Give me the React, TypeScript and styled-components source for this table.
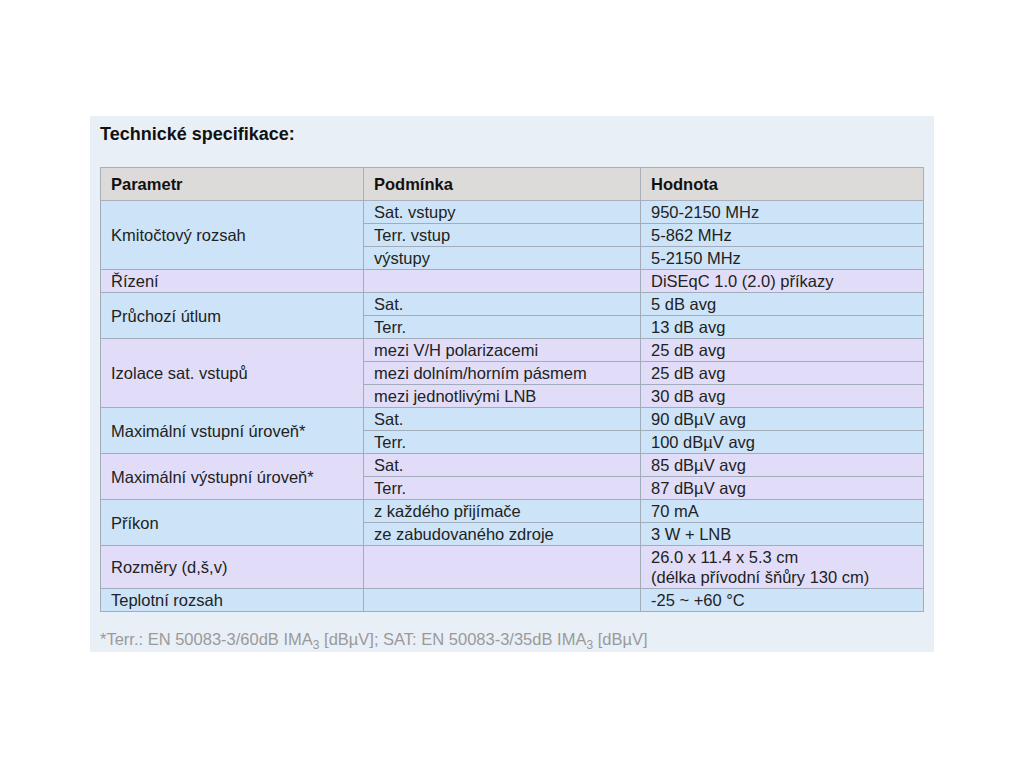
import React from "react";
import styled, { createGlobalStyle } from "styled-components";

const GlobalStyle = createGlobalStyle`
  body {
    margin: 0;
    background: #ffffff;
    font-family: "Liberation Sans", Arial, sans-serif;
  }
`;

const Page = styled.div`
  width: 1024px;
  height: 768px;
  padding: 116px 0 0 90px;
  box-sizing: border-box;
`;

const Panel = styled.section`
  width: 844px;
  height: 536px;
  box-sizing: border-box;
  background: #e9eff6;
  padding: 8px 9px 0 10px;
  display: flex;
  flex-direction: column;
`;

const Title = styled.h3`
  margin: 0;
  font-size: 18px;
  line-height: 20px;
  font-weight: bold;
  color: #111;
`;

const Table = styled.table`
  margin-top: 23px;
  width: 823px;
  border-collapse: collapse;
  table-layout: fixed;
  font-size: 16.5px;
  color: #222;
`;

const Th = styled.th`
  background: #dcdbda;
  border: 1px solid #a9b0b9;
  text-align: left;
  font-weight: bold;
  height: 33px;
  padding: 0 10px;
  box-sizing: border-box;
  color: #111;
`;

const Td = styled.td<{ $tone: "blue" | "lilac" }>`
  background: ${(p) => (p.$tone === "blue" ? "#cde4f8" : "#e1ddf8")};
  border: 1px solid #a3acba;
  padding: 1px 10px;
  line-height: 20px;
  vertical-align: middle;
`;

const Note = styled.p`
  margin: 17px 0 0 0;
  font-size: 16.5px;
  line-height: 20px;
  color: #9a9a9a;
  sub {
    font-size: 12px;
    line-height: 0;
  }
`;

type Group = {
  name: string;
  rows: [string, React.ReactNode][];
};

const groups: Group[] = [
  {
    name: "Kmitočtový rozsah",
    rows: [
      ["Sat. vstupy", "950-2150 MHz"],
      ["Terr. vstup", "5-862 MHz"],
      ["výstupy", "5-2150 MHz"],
    ],
  },
  { name: "Řízení", rows: [["", "DiSEqC 1.0 (2.0) příkazy"]] },
  {
    name: "Průchozí útlum",
    rows: [
      ["Sat.", "5 dB avg"],
      ["Terr.", "13 dB avg"],
    ],
  },
  {
    name: "Izolace sat. vstupů",
    rows: [
      ["mezi V/H polarizacemi", "25 dB avg"],
      ["mezi dolním/horním pásmem", "25 dB avg"],
      ["mezi jednotlivými LNB", "30 dB avg"],
    ],
  },
  {
    name: "Maximální vstupní úroveň*",
    rows: [
      ["Sat.", "90 dBµV avg"],
      ["Terr.", "100 dBµV avg"],
    ],
  },
  {
    name: "Maximální výstupní úroveň*",
    rows: [
      ["Sat.", "85 dBµV avg"],
      ["Terr.", "87 dBµV avg"],
    ],
  },
  {
    name: "Příkon",
    rows: [
      ["z každého přijímače", "70 mA"],
      ["ze zabudovaného zdroje", "3 W + LNB"],
    ],
  },
  {
    name: "Rozměry (d,š,v)",
    rows: [
      [
        "",
        <>
          26.0 x 11.4 x 5.3 cm
          <br />
          (délka přívodní šňůry 130 cm)
        </>,
      ],
    ],
  },
  { name: "Teplotní rozsah", rows: [["", "-25 ~ +60 °C"]] },
];

export default function App() {
  return (
    <>
      <GlobalStyle />
      <Page>
        <Panel>
          <Title>Technické specifikace:</Title>
          <Table>
            <colgroup>
              <col style={{ width: 263 }} />
              <col style={{ width: 277 }} />
              <col style={{ width: 283 }} />
            </colgroup>
            <thead>
              <tr>
                <Th>Parametr</Th>
                <Th>Podmínka</Th>
                <Th>Hodnota</Th>
              </tr>
            </thead>
            <tbody>
              {groups.map((g, gi) => {
                const tone = gi % 2 === 0 ? "blue" : "lilac";
                return g.rows.map((r, ri) => (
                  <tr key={`${gi}-${ri}`}>
                    {ri === 0 && (
                      <Td $tone={tone} rowSpan={g.rows.length}>
                        {g.name}
                      </Td>
                    )}
                    <Td $tone={tone}>{r[0]}</Td>
                    <Td $tone={tone}>{r[1]}</Td>
                  </tr>
                ));
              })}
            </tbody>
          </Table>
          <Note>
            *Terr.: EN 50083-3/60dB IMA<sub>3</sub> [dBµV]; SAT: EN 50083-3/35dB IMA
            <sub>3</sub> [dBµV]
          </Note>
        </Panel>
      </Page>
    </>
  );
}
